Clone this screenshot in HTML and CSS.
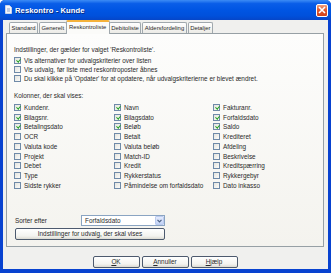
FILE: index.html
```html
<!DOCTYPE html>
<html lang="da">
<head>
<meta charset="utf-8">
<title>Reskontro - Kunde</title>
<link rel="stylesheet" href="styles.css">
</head>
<body>
<div class="window">
  <div class="titlebar">
    <svg class="appicon" width="7" height="9" viewBox="0 0 7 9"><path d="M0.5 0.5h4l2 2v6h-6z" fill="#f4f6fb" stroke="#c9d3e8" stroke-width="1"/><path d="M2 4h3M2 6h3" stroke="#8fa2c8" stroke-width="1"/></svg>
    <span class="title">Reskontro - Kunde</span>
    <div class="close"><svg width="8" height="8" viewBox="0 0 8 8"><path d="M1 1L7 7M7 1L1 7" stroke="#fff" stroke-width="1.6"/></svg></div>
  </div>
  <div class="client">
    <div class="tabs">
      <div class="tab">Standard</div>
      <div class="tab">Generelt</div>
      <div class="tab active">Reskontroliste</div>
      <div class="tab">Debitoliste</div>
      <div class="tab">Aldersfordeling</div>
      <div class="tab">Detaljer</div>
    </div>
    <div class="panel">
      <p class="note">Indstillinger, der gælder for valget 'Reskontroliste'.</p>
      <div class="opts">
        <label class="cb on"><span class="box"></span>Vis alternativer for udvalgskriterier over listen</label>
        <label class="cb"><span class="box"></span>Vis udvalg, før liste med reskontroposter åbnes</label>
        <label class="cb"><span class="box"></span>Du skal klikke på 'Opdater' for at opdatere, når udvalgskriterierne er blevet ændret.</label>
      </div>
      <p class="note second">Kolonner, der skal vises:</p>
      <div class="grid">
        <label class="cb on"><span class="box"></span>Kundenr.</label>
        <label class="cb on"><span class="box"></span>Navn</label>
        <label class="cb on"><span class="box"></span>Fakturanr.</label>
        <label class="cb on"><span class="box"></span>Bilagsnr.</label>
        <label class="cb on"><span class="box"></span>Bilagsdato</label>
        <label class="cb on"><span class="box"></span>Forfaldsdato</label>
        <label class="cb on"><span class="box"></span>Betalingsdato</label>
        <label class="cb on"><span class="box"></span>Beløb</label>
        <label class="cb on"><span class="box"></span>Saldo</label>
        <label class="cb"><span class="box"></span>OCR</label>
        <label class="cb"><span class="box"></span>Betalt</label>
        <label class="cb"><span class="box"></span>Krediteret</label>
        <label class="cb"><span class="box"></span>Valuta kode</label>
        <label class="cb"><span class="box"></span>Valuta beløb</label>
        <label class="cb"><span class="box"></span>Afdeling</label>
        <label class="cb"><span class="box"></span>Projekt</label>
        <label class="cb"><span class="box"></span>Match-ID</label>
        <label class="cb"><span class="box"></span>Beskrivelse</label>
        <label class="cb"><span class="box"></span>Debet</label>
        <label class="cb"><span class="box"></span>Kredit</label>
        <label class="cb"><span class="box"></span>Kreditspærring</label>
        <label class="cb"><span class="box"></span>Type</label>
        <label class="cb"><span class="box"></span>Rykkerstatus</label>
        <label class="cb"><span class="box"></span>Rykkergebyr</label>
        <label class="cb"><span class="box"></span>Sidste rykker</label>
        <label class="cb"><span class="box"></span>Påmindelse om forfaldsdato</label>
        <label class="cb"><span class="box"></span>Dato inkasso</label>
      </div>
      <div class="sortrow">
        <span class="sortlabel">Sorter efter</span>
        <div class="combo"><span class="combotext">Forfaldsdato</span><span class="arrow"><svg width="5" height="4" viewBox="0 0 5 4"><path d="M0.5 0.8L2.5 2.8L4.5 0.8" fill="none" stroke="#4d6185" stroke-width="1.2"/></svg></span></div>
      </div>
      <button class="btn wide">Indstillinger for udvalg, der skal vises</button>
    </div>
    <div class="buttons">
      <button class="btn"><u>O</u>K</button>
      <button class="btn"><u>A</u>nnuller</button>
      <button class="btn"><u>H</u>jælp</button>
    </div>
  </div>
</div>
</body>
</html>
```

FILE: styles.css
```css
html, body {
  margin: 0;
  padding: 0;
  background: #ffffff;
}
body {
  width: 331px;
  height: 273px;
  overflow: hidden;
  font-family: "Liberation Sans", Arial, sans-serif;
  font-size: 6.4px;
  color: #2a2a2a;
}
.window {
  width: 331px;
  height: 273px;
  box-sizing: border-box;
  display: flex;
  flex-direction: column;
  background: #0842d0;
  border-radius: 5px 5px 0 0;
  padding: 0 3px 4px 3px;
}
.titlebar {
  height: 20px;
  flex: none;
  margin: 0 -3px;
  padding: 0 3px 0 5px;
  display: flex;
  align-items: center;
  border-radius: 5px 5px 0 0;
  background: linear-gradient(#3d8cf5 0%, #0a5ee8 18%, #0055e3 50%, #0050db 80%, #0646c8 100%);
}
.appicon {
  flex: none;
  margin-top: -1px;
}
.title {
  margin-left: 3px;
  color: #ffffff;
  font-weight: bold;
  font-size: 7.6px;
  letter-spacing: 0.1px;
  text-shadow: 1px 1px 0 #0a2a80;
}
.close {
  margin-left: auto;
  width: 12px;
  height: 13px;
  box-sizing: border-box;
  border: 1px solid #ffffff;
  border-radius: 2px;
  background: linear-gradient(#f0a080, #e2582c 45%, #d0421a);
  display: flex;
  align-items: center;
  justify-content: center;
}
.client {
  flex: 1;
  background: #f0f0ee;
  padding: 0 4px 0 3px;
  display: flex;
  flex-direction: column;
}
.tabs {
  display: flex;
  align-items: flex-end;
  height: 13px;
  padding-left: 3px;
  position: relative;
  z-index: 1;
}
.tab {
  height: 11px;
  box-sizing: border-box;
  padding: 0 1.5px;
  margin-right: 1px;
  border: 1px solid #a0a8ad;
  border-bottom: none;
  border-radius: 2px 2px 0 0;
  background: linear-gradient(#ffffff, #ecebe6);
  line-height: 10px;
  font-size: 5.9px;
  color: #2a2a2a;
  white-space: nowrap;
}
.tab.active {
  height: 14px;
  margin: 0 -1px -1px -2px;
  padding: 0 2.5px;
  border-top: 2px solid #f5b23a;
  background: #fbfbf9;
  line-height: 11px;
  position: relative;
}
.panel {
  height: 214px;
  box-sizing: border-box;
  border: 1px solid #97a0a5;
  background: linear-gradient(#fdfdfc, #f4f3ee);
  padding: 11px 7px 0 7px;
  display: flex;
  flex-direction: column;
}
.note {
  margin: 0;
  line-height: 9px;
  height: 9px;
  white-space: nowrap;
}
.opts {
  margin-top: 1.5px;
  display: flex;
  flex-direction: column;
}
.note.second {
  margin-top: 8px;
}
.cb {
  display: flex;
  align-items: center;
  height: 9px;
  line-height: 9px;
  white-space: nowrap;
}
.box {
  flex: none;
  width: 7px;
  height: 7px;
  box-sizing: border-box;
  border: 1px solid #6f8aa8;
  background: linear-gradient(135deg, #e4e4de, #fbfbf9);
  margin-right: 3px;
  position: relative;
}
.cb.on .box::after {
  content: "";
  position: absolute;
  left: 1.5px;
  top: 0px;
  width: 1.6px;
  height: 3.2px;
  border: solid #22a122;
  border-width: 0 1.2px 1.2px 0;
  transform: rotate(40deg);
}
.grid {
  margin-top: 3px;
  display: grid;
  grid-template-columns: 100px 99px 1fr;
  grid-auto-rows: 9.75px;
}
.grid .cb {
  height: 9.75px;
}
.sortrow {
  margin-top: auto;
  display: flex;
  align-items: center;
  padding-left: 1px;
  height: 11px;
}
.sortlabel {
  width: 66px;
}
.combo {
  width: 84px;
  height: 11px;
  box-sizing: border-box;
  border: 1px solid #8aa4c2;
  background: #ffffff;
  display: flex;
  align-items: center;
}
.combotext {
  flex: 1;
  padding-left: 3px;
}
.arrow {
  width: 9px;
  height: 9px;
  box-sizing: border-box;
  border: 1px solid #bccbef;
  border-radius: 1px;
  background: linear-gradient(#e3ebfd, #c3d3f6);
  display: flex;
  align-items: center;
  justify-content: center;
}
.btn {
  font-family: inherit;
  font-size: 6.4px;
  color: #2a2a2a;
  height: 12px;
  padding: 0;
  box-sizing: border-box;
  border: 1px solid #4d5a6e;
  border-radius: 2px;
  background: linear-gradient(#ffffff, #f3f3ef 70%, #dcdad2);
  line-height: 10px;
}
.btn.wide {
  margin: 2px 0 6px 1px;
  width: 150px;
}
.buttons {
  display: flex;
  justify-content: center;
  gap: 2px;
  margin-top: 9px;
}
.buttons .btn {
  width: 47px;
}
u {
  text-decoration: underline;
  text-underline-offset: 1px;
}
```
